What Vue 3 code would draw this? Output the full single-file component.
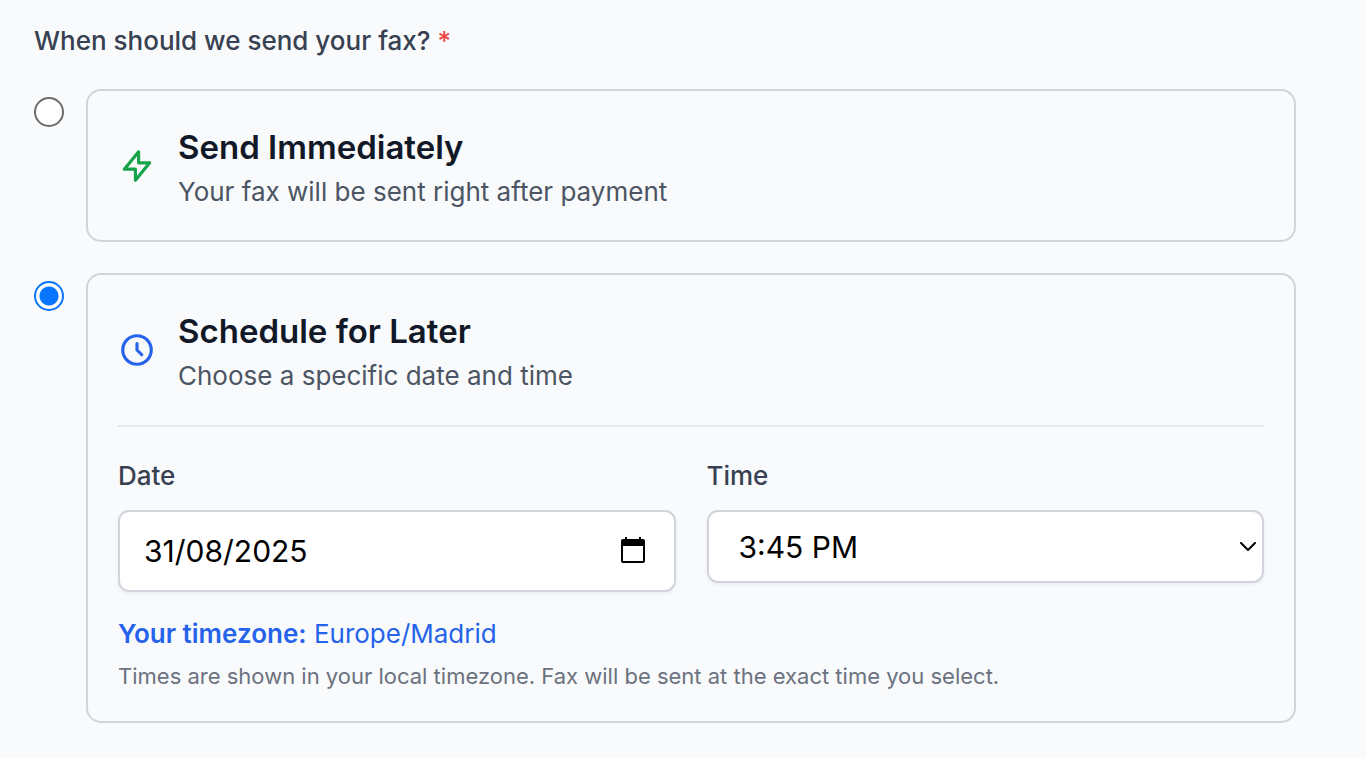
<script setup>
import { ref } from 'vue'

const delivery = ref('later')
const date = ref('31/08/2025')
const time = ref('3:45 PM')
const times = ['3:30 PM', '3:45 PM', '4:00 PM', '4:15 PM']
</script>

<template>
  <form class="page" @submit.prevent>
    <fieldset class="schedule">
      <legend class="question">When should we send your fax? <span class="required">*</span></legend>

      <div class="option">
        <input id="send-now" v-model="delivery" class="radio" type="radio" name="delivery" value="now">
        <div class="card">
          <label class="summary" for="send-now">
            <svg class="icon bolt" viewBox="0 0 24 24" aria-hidden="true">
              <path d="M13 10V3L4 14h7v7l9-11h-7z" />
            </svg>
            <span class="copy">
              <span class="title">Send Immediately</span>
              <span class="detail">Your fax will be sent right after payment</span>
            </span>
          </label>
        </div>
      </div>

      <div class="option">
        <input id="send-later" v-model="delivery" class="radio" type="radio" name="delivery" value="later">
        <div class="card">
          <label class="summary" for="send-later">
            <svg class="icon clock" viewBox="0 0 24 24" aria-hidden="true">
              <path d="M12 8v4l3 3m6-3a9 9 0 11-18 0 9 9 0 0118 0z" />
            </svg>
            <span class="copy">
              <span class="title">Schedule for Later</span>
              <span class="detail">Choose a specific date and time</span>
            </span>
          </label>

          <div class="settings">
            <div class="fields">
              <div class="field">
                <label class="label" for="date">Date</label>
                <div class="control date-control">
                  <input id="date" v-model="date" class="date" type="text">
                  <button class="picker" type="button" aria-label="Open calendar">
                    <svg class="calendar" viewBox="0 0 26 28" aria-hidden="true">
                      <path d="M3 2h20a2 2 0 0 1 2 2v20a2 2 0 0 1-2 2H3a2 2 0 0 1-2-2V4a2 2 0 0 1 2-2zM3 9v15h20V9z" fill-rule="evenodd" />
                      <path d="M5 0h2v3H5zM19 0h2v3h-2z" />
                    </svg>
                  </button>
                </div>
              </div>
              <div class="field">
                <label class="label" for="time">Time</label>
                <div class="control time-control">
                  <select id="time" v-model="time" class="time">
                    <option v-for="slot in times" :key="slot">{{ slot }}</option>
                  </select>
                  <svg class="chevron" viewBox="0 0 16 10" aria-hidden="true">
                    <path d="M1 1l7 7 7-7" />
                  </svg>
                </div>
              </div>
            </div>
            <p class="timezone"><strong>Your timezone:</strong> Europe/Madrid</p>
            <p class="hint">Times are shown in your local timezone. Fax will be sent at the exact time you select.</p>
          </div>
        </div>
      </div>
    </fieldset>
  </form>
</template>

<style>
body {
  margin: 0;
  background: #f9fafb;
}
</style>

<style scoped>
.page {
  padding: 22px 70px 35px 34px;
  color: #374151;
  font-family: Inter, "Liberation Sans", sans-serif;
  font-size: 26px;
  line-height: 38px;
}
.schedule {
  display: flex;
  flex-direction: column;
  gap: 31px;
  min-width: 0;
  margin: 0;
  padding: 0;
  border: 0;
}
.question {
  margin-bottom: 29px;
  padding: 0;
  font-weight: 500;
}
.required {
  color: #ef4444;
}
.option {
  display: flex;
  align-items: flex-start;
  gap: 22px;
}
.radio {
  appearance: none;
  box-sizing: border-box;
  flex: none;
  width: 30px;
  height: 30px;
  margin: 8px 0 0;
  border: 2px solid #6b6b6b;
  border-radius: 50%;
  background: #fff;
}
.radio:checked {
  border-color: #0a75ff;
  background: radial-gradient(circle, #0a75ff 9px, #fff 10px);
}
.card {
  box-sizing: border-box;
  flex: 1;
  min-width: 0;
  padding: 30px;
  border: 2px solid #d1d5db;
  border-radius: 15px;
}
.summary {
  display: flex;
  align-items: center;
  gap: 22px;
}
.icon {
  flex: none;
  width: 38px;
  height: 38px;
  fill: none;
  stroke-width: 2;
  stroke-linecap: round;
  stroke-linejoin: round;
}
.bolt {
  stroke: #16a34a;
}
.clock {
  stroke: #2563eb;
}
.copy {
  display: flex;
  flex-direction: column;
}
.title {
  color: #111827;
  font-size: 33px;
  font-weight: 600;
  line-height: 52px;
}
.detail {
  color: #4b5563;
  line-height: 37px;
}
.settings {
  margin-top: 31px;
  padding-top: 30px;
  border-top: 2px solid #e5e7eb;
}
.fields {
  display: grid;
  grid-template-columns: 1fr 1fr;
  align-items: start;
  gap: 31px;
}
.label {
  display: block;
  margin-bottom: 15px;
  font-weight: 500;
}
.control {
  display: flex;
  align-items: center;
  box-sizing: border-box;
  border: 2px solid #d1d5db;
  border-radius: 11px;
  background: #fff;
  box-shadow: 0 2px 4px rgb(0 0 0 / 5%);
}
.date-control {
  height: 82px;
  padding: 0 24px;
}
.time-control {
  position: relative;
  height: 73px;
}
.date,
.time {
  appearance: none;
  flex: 1;
  min-width: 0;
  height: 100%;
  padding: 0;
  border: 0;
  background: transparent;
  color: #000;
  font-family: inherit;
  font-size: 30px;
}
.time {
  padding: 0 30px;
}
.picker {
  display: flex;
  padding: 0 4px;
  border: 0;
  background: none;
}
.calendar {
  width: 26px;
  height: 28px;
}
.chevron {
  position: absolute;
  right: 6px;
  width: 16px;
  height: 10px;
  fill: none;
  stroke: #000;
  stroke-width: 2;
  stroke-linecap: round;
  stroke-linejoin: round;
  pointer-events: none;
}
.timezone {
  margin: 23px 0 0;
  color: #2563eb;
}
.timezone strong {
  font-weight: 600;
}
.hint {
  margin: 8px 0 0;
  color: #6b7280;
  font-size: 22px;
  line-height: 30px;
}
</style>
